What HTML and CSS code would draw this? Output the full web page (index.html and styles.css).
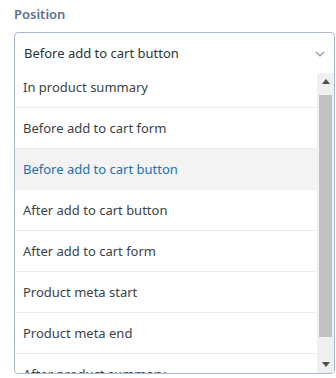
FILE: index.html
```html
<!DOCTYPE html>
<html>
<head>
<meta charset="utf-8">
<link rel="stylesheet" href="styles.css">
</head>
<body>
<div class="field">
  <div class="label">Position</div>
  <div class="select">
    <div class="current">
      <span>Before add to cart button</span>
      <svg class="chev" width="10" height="6" viewBox="0 0 10 6"><path d="M1 1l4 4 4-4" fill="none" stroke="#8c8f94" stroke-width="1.2"/></svg>
    </div>
    <div class="dropdown">
      <div class="viewport">
        <ul class="options">
          <li>In product summary</li>
          <li>Before add to cart form</li>
          <li class="active">Before add to cart button</li>
          <li>After add to cart button</li>
          <li>After add to cart form</li>
          <li>Product meta start</li>
          <li>Product meta end</li>
          <li>After product summary</li>
        </ul>
      </div>
      <div class="scrollbar">
        <div class="sb-btn"><svg width="8" height="5" viewBox="0 0 8 5"><path d="M4 0L8 5H0z" fill="#505050"/></svg></div>
        <div class="thumb"></div>
        <div class="sb-btn bottom"><svg width="8" height="5" viewBox="0 0 8 5"><path d="M0 0H8L4 5z" fill="#505050"/></svg></div>
      </div>
    </div>
  </div>
</div>
</body>
</html>
```
FILE: styles.css
```css
html, body {
  margin: 0;
  padding: 0;
  background: #fff;
}
body {
  font-family: "Noto Sans", "Open Sans", sans-serif;
  font-size: 13px;
  color: #3c434a;
}
.field {
  padding: 4px 1px 0 14px;
}
.label {
  font-weight: 600;
  color: #5b7190;
  line-height: 20px;
  margin-bottom: 8px;
}
.select {
  border: 1px solid #a9b8cb;
  border-radius: 4px;
  overflow: hidden;
}
.current {
  height: 40px;
  display: flex;
  align-items: center;
  justify-content: space-between;
  padding: 0 9px 0 9px;
  color: #2c3338;
}
.chev {
  margin-top: 2px;
}
.dropdown {
  display: flex;
  height: 300px;
}
.viewport {
  flex: 1;
  overflow: hidden;
}
.options {
  list-style: none;
  margin: -6px 0 0 0;
  padding: 0;
}
.options li {
  height: 40px;
  line-height: 40px;
  padding-left: 8px;
  border-bottom: 1px solid #ececec;
  white-space: nowrap;
}
.options li.active {
  background: #f3f3f3;
  color: #2271b1;
}
.scrollbar {
  width: 17px;
  background: #f0f0f0;
  display: flex;
  flex-direction: column;
}
.sb-btn {
  height: 17px;
  display: flex;
  align-items: center;
  justify-content: center;
}
.thumb {
  margin: 5px 2px 0 2px;
  height: 242px;
  background: #c1c1c1;
}
.sb-btn.bottom {
  margin-top: auto;
}
```
